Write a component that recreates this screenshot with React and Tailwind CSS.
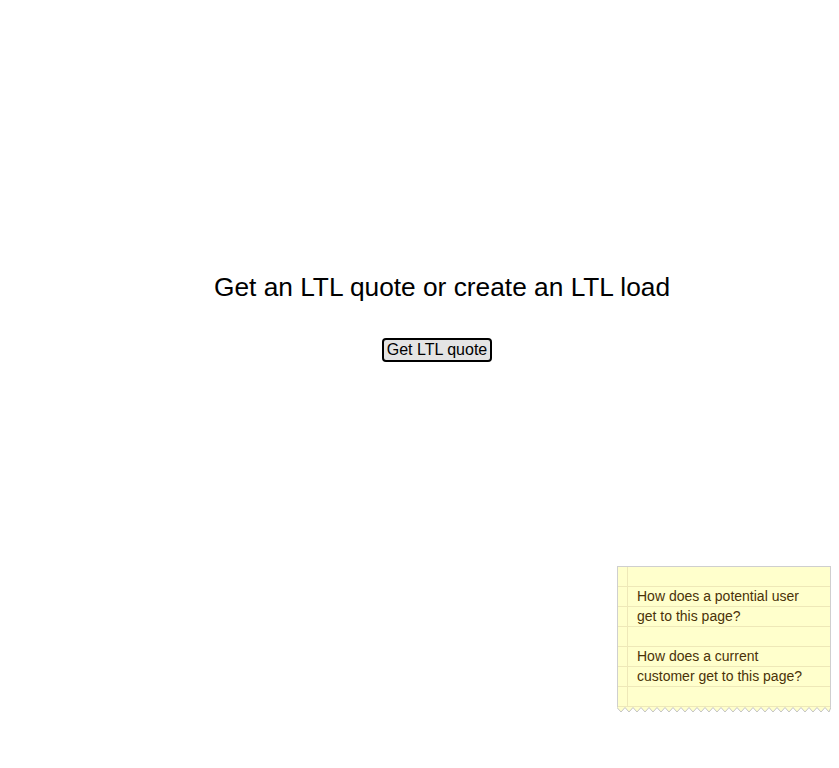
import React from "react";

const notes = ["How does a potential user get to this page?", "How does a current customer get to this page?"];

const Zigzag = () => {
  let pts = "0,0 ";
  for (let x = 0; x <= 214; x += 8) {
    pts += `${x},0.5 ${x + 4},5 `;
  }
  pts += "214,0";
  return (
    <svg width="214" height="6" viewBox="0 0 214 6" className="block">
      <polyline points={pts} fill="#ffffcc" stroke="#c4c4c4" strokeWidth="1" />
    </svg>
  );
};

const StickyNote = () => {
  return (
    <div className="absolute left-[617px] top-[566px] w-[214px]">
      <div className="flex h-[141px] border-l border-t border-r border-[#cfcfcf] bg-[repeating-linear-gradient(to_bottom,#ffffcc_0px,#ffffcc_19px,#eee8b8_19px,#eee8b8_20px)]">
        <div className="w-[9px] shrink-0" />
        <div className="w-px shrink-0 bg-[#eee8b8]" />
        <div className="pl-[9px] pt-[19px] w-[180px] text-[14px] leading-[20px] text-[#4a3208] font-['Liberation_Sans',Arial,sans-serif]">
          {notes.map((n, i) => (
            <p key={i} className={i > 0 ? "mt-[20px]" : ""}>
              {n}
            </p>
          ))}
        </div>
      </div>
      <Zigzag />
    </div>
  );
};

export default function App() {
  return (
    <div className="relative h-[768px] w-full bg-white font-['Liberation_Sans',Arial,sans-serif] text-black">
      <div className="pl-[45px] pt-[272px] text-center">
        <h1 className="text-[26.3px] leading-[30px]">Get an LTL quote or create an LTL load</h1>
        <div className="mt-[36px]">
          <button className="mr-[10px] h-[24px] rounded-[4px] border-2 border-black bg-[#e4e4e4] px-[3px] text-[16px] leading-[18px]">
            Get LTL quote
          </button>
        </div>
      </div>
      <StickyNote />
    </div>
  );
}
